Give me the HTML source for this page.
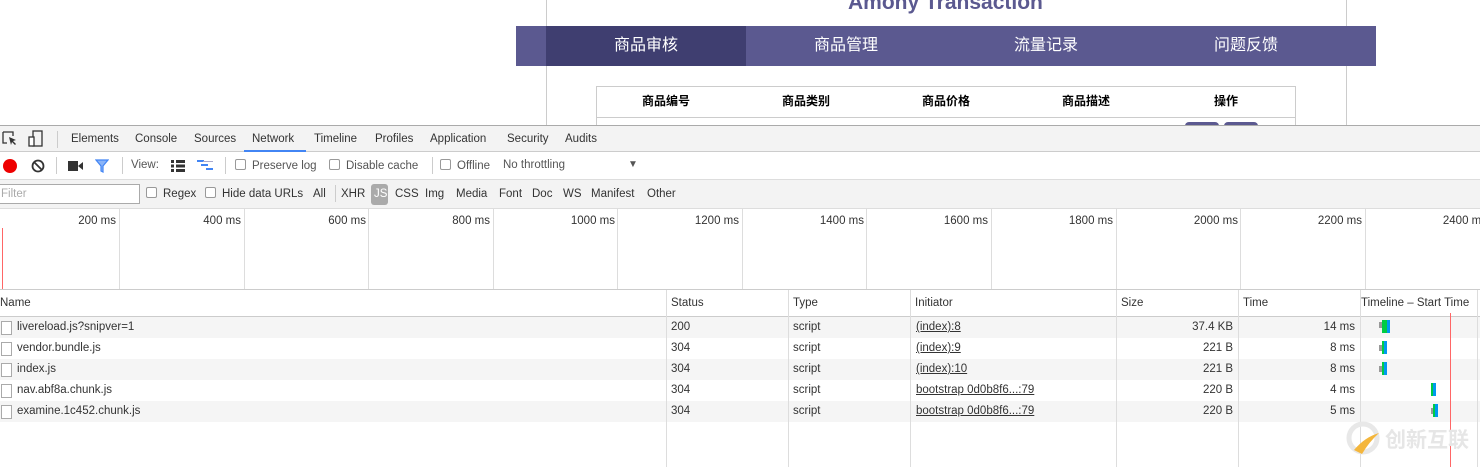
<!DOCTYPE html>
<html><head><meta charset="utf-8"><style>
*{margin:0;padding:0;box-sizing:border-box}
body{width:1480px;height:467px;overflow:hidden;background:#fff;font-family:"Liberation Sans","Noto Sans CJK SC",sans-serif;font-size:11.5px;color:#333;position:relative}
.a{position:absolute}
.t{white-space:nowrap}
.nav{color:#fff;font-size:16px;text-align:center;top:26px;height:40px;line-height:40px}
.th{font-size:12px;font-weight:bold;color:#000;top:86px;height:31px;line-height:31px;text-align:center}
.tab{top:126px;height:27px;line-height:27px;color:#333}
.vl{width:1px;background:#ddd}
.row{left:0;width:1480px;height:21px;line-height:21px}
.cb{display:inline-block;width:11px;height:11px;border:1px solid #999;border-radius:2px;background:#fff;vertical-align:-1px;margin-right:6px}
</style></head><body>
<div class="a" style="left:546px;top:0;width:1px;height:125px;background:#ccc"></div>
<div class="a" style="left:1346px;top:0;width:1px;height:125px;background:#ccc"></div>
<div class="a t" style="left:848px;top:-9px;font-size:21px;font-weight:bold;color:#5b5990">Amony Transaction</div>
<div class="a" style="left:516px;top:26px;width:860px;height:40px;background:#5b5990"></div>
<div class="a" style="left:546px;top:26px;width:200px;height:40px;background:#3f3e70"></div>
<div class="a nav" style="left:546px;width:200px">商品审核</div>
<div class="a nav" style="left:746px;width:200px">商品管理</div>
<div class="a nav" style="left:946px;width:200px">流量记录</div>
<div class="a nav" style="left:1146px;width:200px">问题反馈</div>
<div class="a" style="left:596px;top:86px;width:700px;height:40px;border:1px solid #ccc;border-bottom:none"></div>
<div class="a" style="left:596px;top:117px;width:700px;height:1px;background:#ccc"></div>
<div class="a th" style="left:596px;width:140px">商品编号</div>
<div class="a th" style="left:736px;width:140px">商品类别</div>
<div class="a th" style="left:876px;width:140px">商品价格</div>
<div class="a th" style="left:1016px;width:140px">商品描述</div>
<div class="a th" style="left:1156px;width:140px">操作</div>
<div class="a" style="left:1185px;top:122px;width:34px;height:4px;background:#5b5990;border-radius:4px 4px 0 0"></div>
<div class="a" style="left:1224px;top:122px;width:34px;height:4px;background:#5b5990;border-radius:4px 4px 0 0"></div>
<div class="a" style="left:0;top:125px;width:1480px;height:342px;background:#fff;border-top:1px solid #aaa"></div>
<div class="a" style="left:0;top:126px;width:1480px;height:26px;background:#f3f3f3;border-bottom:1px solid #ccc"></div>
<svg class="a" style="left:2px;top:131px" width="16" height="16"><path d="M1 1h10v4M1 1v11h4" fill="none" stroke="#333" stroke-width="1.3"/><path d="M7 6l7 3-3 1 3 3-1 1-3-3-1 3z" fill="#333"/></svg>
<svg class="a" style="left:28px;top:130px" width="16" height="18"><rect x="5" y="1" width="9" height="15" fill="none" stroke="#333" stroke-width="1.3"/><rect x="1" y="7" width="5" height="9" fill="#fff" stroke="#333" stroke-width="1.3"/></svg>
<div class="a" style="left:57px;top:131px;width:1px;height:17px;background:#ccc"></div>
<div class="a tab t" style="left:71px">Elements</div>
<div class="a tab t" style="left:135px">Console</div>
<div class="a tab t" style="left:194px">Sources</div>
<div class="a tab t" style="left:252px">Network</div>
<div class="a" style="left:244px;top:150px;width:62px;height:2px;background:#4285f4"></div>
<div class="a tab t" style="left:314px">Timeline</div>
<div class="a tab t" style="left:375px">Profiles</div>
<div class="a tab t" style="left:430px">Application</div>
<div class="a tab t" style="left:507px">Security</div>
<div class="a tab t" style="left:565px">Audits</div>
<div class="a" style="left:0;top:179px;width:1480px;height:30px;background:#f3f3f3;border-top:1px solid #ddd;border-bottom:1px solid #ddd"></div>
<div class="a" style="left:3px;top:159px;width:14px;height:14px;border-radius:50%;background:#e00"></div>
<svg class="a" style="left:31px;top:159px" width="14" height="14"><circle cx="7" cy="7" r="5.5" fill="none" stroke="#333" stroke-width="1.8"/><path d="M3 3l8 8" stroke="#333" stroke-width="1.8"/></svg>
<div class="a" style="left:56px;top:157px;width:1px;height:17px;background:#ccc"></div>
<svg class="a" style="left:68px;top:160px" width="16" height="12"><rect x="0" y="1" width="10" height="10" fill="#333"/><path d="M10 6l5-4v8z" fill="#333"/></svg>
<svg class="a" style="left:95px;top:159px" width="14" height="14"><path d="M1 1h12l-5 6v6l-2-1v-5z" fill="#8ab4f8" stroke="#4285f4" stroke-width="1.2"/></svg>
<div class="a" style="left:122px;top:157px;width:1px;height:17px;background:#ccc"></div>
<div class="a t" style="left:131px;top:159px;color:#555">View:</div>
<svg class="a" style="left:171px;top:160px" width="14" height="12"><rect x="0" y="0" width="3" height="3" fill="#333"/><rect x="5" y="0" width="9" height="3" fill="#333"/><rect x="0" y="4.5" width="3" height="3" fill="#333"/><rect x="5" y="4.5" width="9" height="3" fill="#333"/><rect x="0" y="9" width="3" height="3" fill="#333"/><rect x="5" y="9" width="9" height="3" fill="#333"/></svg>
<svg class="a" style="left:197px;top:160px" width="16" height="12"><rect x="0" y="0" width="7" height="2" fill="#4285f4"/><rect x="4" y="4" width="7" height="2" fill="#4285f4"/><rect x="9" y="8" width="7" height="2" fill="#4285f4"/><rect x="6" y="1" width="10" height="1" fill="#aac"/></svg>
<div class="a" style="left:225px;top:157px;width:1px;height:17px;background:#ccc"></div>
<div class="a t" style="left:235px;top:159px;color:#555"><span class="cb"></span>Preserve log</div>
<div class="a t" style="left:329px;top:159px;color:#555"><span class="cb"></span>Disable cache</div>
<div class="a" style="left:432px;top:157px;width:1px;height:17px;background:#ccc"></div>
<div class="a t" style="left:440px;top:159px;color:#555"><span class="cb"></span>Offline</div>
<div class="a t" style="left:503px;top:159px;color:#555">No throttling</div>
<div class="a t" style="left:628px;top:159px;color:#555;font-size:10px">▼</div>
<div class="a" style="left:-2px;top:184px;width:142px;height:20px;background:#fff;border:1px solid #aaa"></div>
<div class="a t" style="left:1px;top:188px;color:#aaa">Filter</div>
<div class="a t" style="left:146px;top:187px;color:#333"><span class="cb"></span>Regex</div>
<div class="a t" style="left:205px;top:187px;color:#333"><span class="cb"></span>Hide data URLs</div>
<div class="a t" style="left:313px;top:188px">All</div>
<div class="a" style="left:335px;top:185px;width:1px;height:17px;background:#ccc"></div>
<div class="a t" style="left:341px;top:188px">XHR</div>
<div class="a" style="left:371px;top:184px;width:17px;height:21px;background:#aaa;border-radius:3px"></div>
<div class="a t" style="left:374px;top:188px;color:#fff">JS</div>
<div class="a t" style="left:395px;top:188px">CSS</div>
<div class="a t" style="left:425px;top:188px">Img</div>
<div class="a t" style="left:456px;top:188px">Media</div>
<div class="a t" style="left:499px;top:188px">Font</div>
<div class="a t" style="left:532px;top:188px">Doc</div>
<div class="a t" style="left:563px;top:188px">WS</div>
<div class="a t" style="left:591px;top:188px">Manifest</div>
<div class="a t" style="left:647px;top:188px">Other</div>
<div class="a vl" style="left:119px;top:209px;height:80px"></div>
<div class="a vl" style="left:244px;top:209px;height:80px"></div>
<div class="a vl" style="left:368px;top:209px;height:80px"></div>
<div class="a vl" style="left:493px;top:209px;height:80px"></div>
<div class="a vl" style="left:617px;top:209px;height:80px"></div>
<div class="a vl" style="left:742px;top:209px;height:80px"></div>
<div class="a vl" style="left:866px;top:209px;height:80px"></div>
<div class="a vl" style="left:991px;top:209px;height:80px"></div>
<div class="a vl" style="left:1116px;top:209px;height:80px"></div>
<div class="a vl" style="left:1240px;top:209px;height:80px"></div>
<div class="a vl" style="left:1365px;top:209px;height:80px"></div>
<div class="a t" style="left:0;width:116px;text-align:right;top:215px">200 ms</div>
<div class="a t" style="left:120px;width:121px;text-align:right;top:215px">400 ms</div>
<div class="a t" style="left:245px;width:121px;text-align:right;top:215px">600 ms</div>
<div class="a t" style="left:369px;width:121px;text-align:right;top:215px">800 ms</div>
<div class="a t" style="left:494px;width:121px;text-align:right;top:215px">1000 ms</div>
<div class="a t" style="left:618px;width:121px;text-align:right;top:215px">1200 ms</div>
<div class="a t" style="left:743px;width:121px;text-align:right;top:215px">1400 ms</div>
<div class="a t" style="left:867px;width:121px;text-align:right;top:215px">1600 ms</div>
<div class="a t" style="left:992px;width:121px;text-align:right;top:215px">1800 ms</div>
<div class="a t" style="left:1117px;width:121px;text-align:right;top:215px">2000 ms</div>
<div class="a t" style="left:1241px;width:121px;text-align:right;top:215px">2200 ms</div>
<div class="a t" style="left:1366px;width:121px;text-align:right;top:215px">2400 ms</div>
<div class="a" style="left:2px;top:228px;width:1px;height:61px;background:#f66"></div>
<div class="a" style="left:0;top:289px;width:1480px;height:28px;border-top:1px solid #ccc;border-bottom:1px solid #ccc"></div>
<div class="a" style="left:0;top:317px;width:1480px;height:21px;background:#f5f5f5"></div>
<div class="a" style="left:0;top:359px;width:1480px;height:21px;background:#f5f5f5"></div>
<div class="a" style="left:0;top:401px;width:1480px;height:21px;background:#f5f5f5"></div>
<div class="a vl" style="left:666px;top:290px;height:177px"></div>
<div class="a vl" style="left:788px;top:290px;height:177px"></div>
<div class="a vl" style="left:910px;top:290px;height:177px"></div>
<div class="a vl" style="left:1116px;top:290px;height:177px"></div>
<div class="a vl" style="left:1238px;top:290px;height:177px"></div>
<div class="a vl" style="left:1360px;top:290px;height:177px"></div>
<div class="a vl" style="left:1477px;top:290px;height:177px"></div>
<div class="a t" style="left:0;top:297px">Name</div>
<div class="a t" style="left:671px;top:297px">Status</div>
<div class="a t" style="left:793px;top:297px">Type</div>
<div class="a t" style="left:915px;top:297px">Initiator</div>
<div class="a t" style="left:1121px;top:297px">Size</div>
<div class="a t" style="left:1243px;top:297px">Time</div>
<div class="a t" style="left:1361px;top:297px">Timeline – Start Time</div>
<div class="a" style="left:1450px;top:313px;width:1px;height:154px;background:#f66"></div>
<div class="a row" style="top:317px">
<div class="a" style="left:1px;top:4px;width:11px;height:14px;border:1px solid #aaa;background:#fff"></div>
<div class="a t" style="left:17px">livereload.js?snipver=1</div><div class="a t" style="left:671px">200</div><div class="a t" style="left:793px">script</div><div class="a t" style="left:916px;text-decoration:underline">(index):8</div><div class="a t" style="left:1116px;width:117px;text-align:right">37.4 KB</div><div class="a t" style="left:1238px;width:117px;text-align:right">14 ms</div>
<div class="a" style="left:1379px;top:5px;width:3px;height:6px;background:#999"></div><div class="a" style="left:1382px;top:3px;width:5px;height:13px;background:#0c4"></div><div class="a" style="left:1387px;top:3px;width:3px;height:13px;background:#09e"></div></div>
<div class="a row" style="top:338px">
<div class="a" style="left:1px;top:4px;width:11px;height:14px;border:1px solid #aaa;background:#fff"></div>
<div class="a t" style="left:17px">vendor.bundle.js</div><div class="a t" style="left:671px">304</div><div class="a t" style="left:793px">script</div><div class="a t" style="left:916px;text-decoration:underline">(index):9</div><div class="a t" style="left:1116px;width:117px;text-align:right">221 B</div><div class="a t" style="left:1238px;width:117px;text-align:right">8 ms</div>
<div class="a" style="left:1379px;top:7px;width:3px;height:6px;background:#999"></div><div class="a" style="left:1382px;top:3px;width:2px;height:13px;background:#0c4"></div><div class="a" style="left:1384px;top:3px;width:3px;height:13px;background:#09e"></div></div>
<div class="a row" style="top:359px">
<div class="a" style="left:1px;top:4px;width:11px;height:14px;border:1px solid #aaa;background:#fff"></div>
<div class="a t" style="left:17px">index.js</div><div class="a t" style="left:671px">304</div><div class="a t" style="left:793px">script</div><div class="a t" style="left:916px;text-decoration:underline">(index):10</div><div class="a t" style="left:1116px;width:117px;text-align:right">221 B</div><div class="a t" style="left:1238px;width:117px;text-align:right">8 ms</div>
<div class="a" style="left:1379px;top:7px;width:3px;height:6px;background:#999"></div><div class="a" style="left:1382px;top:3px;width:2px;height:13px;background:#0c4"></div><div class="a" style="left:1384px;top:3px;width:3px;height:13px;background:#09e"></div></div>
<div class="a row" style="top:380px">
<div class="a" style="left:1px;top:4px;width:11px;height:14px;border:1px solid #aaa;background:#fff"></div>
<div class="a t" style="left:17px">nav.abf8a.chunk.js</div><div class="a t" style="left:671px">304</div><div class="a t" style="left:793px">script</div><div class="a t" style="left:916px;text-decoration:underline">bootstrap 0d0b8f6...:79</div><div class="a t" style="left:1116px;width:117px;text-align:right">220 B</div><div class="a t" style="left:1238px;width:117px;text-align:right">4 ms</div>
<div class="a" style="left:1431px;top:3px;width:2px;height:13px;background:#0c4"></div><div class="a" style="left:1433px;top:3px;width:3px;height:13px;background:#09e"></div></div>
<div class="a row" style="top:401px">
<div class="a" style="left:1px;top:4px;width:11px;height:14px;border:1px solid #aaa;background:#fff"></div>
<div class="a t" style="left:17px">examine.1c452.chunk.js</div><div class="a t" style="left:671px">304</div><div class="a t" style="left:793px">script</div><div class="a t" style="left:916px;text-decoration:underline">bootstrap 0d0b8f6...:79</div><div class="a t" style="left:1116px;width:117px;text-align:right">220 B</div><div class="a t" style="left:1238px;width:117px;text-align:right">5 ms</div>
<div class="a" style="left:1431px;top:7px;width:2px;height:6px;background:#999"></div><div class="a" style="left:1433px;top:3px;width:2px;height:13px;background:#0c4"></div><div class="a" style="left:1435px;top:3px;width:3px;height:13px;background:#09e"></div></div>
<svg class="a" style="left:1345px;top:420px" width="36" height="36"><circle cx="18" cy="18" r="14" fill="none" stroke="#e8e8e8" stroke-width="5"/><path d="M9 30 Q20 17 34 13 Q24 22 17 34z" fill="#f4b63c"/></svg>
<div class="a t" style="left:1385px;top:424px;font-size:21px;color:#e6e6e6;font-weight:bold">创新互联</div>
</body></html>
